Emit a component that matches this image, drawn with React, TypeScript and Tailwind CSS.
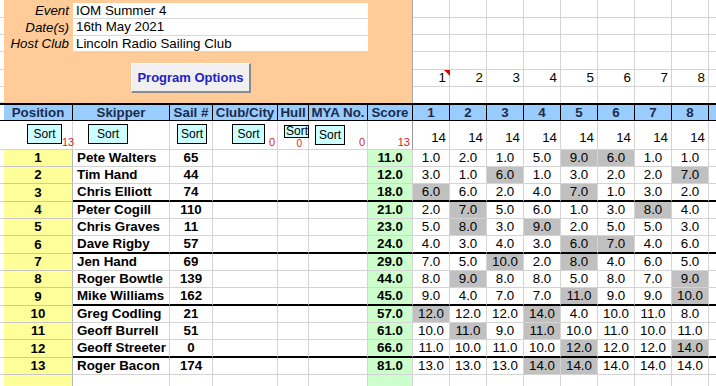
import React from "react";

type Row = { p: number; n: string; s: number; t: string; r: number[]; g: number[] };

const rows: Row[] = [
  { p: 1, n: "Pete Walters", s: 65, t: "11.0", r: [1, 2, 1, 5, 9, 6, 1, 1], g: [4, 5] },
  { p: 2, n: "Tim Hand", s: 44, t: "12.0", r: [3, 1, 6, 1, 3, 2, 2, 7], g: [2, 7] },
  { p: 3, n: "Chris Elliott", s: 74, t: "18.0", r: [6, 6, 2, 4, 7, 1, 3, 2], g: [0, 4] },
  { p: 4, n: "Peter Cogill", s: 110, t: "21.0", r: [2, 7, 5, 6, 1, 3, 8, 4], g: [1, 6] },
  { p: 5, n: "Chris Graves", s: 11, t: "23.0", r: [5, 8, 3, 9, 2, 5, 5, 3], g: [1, 3] },
  { p: 6, n: "Dave Rigby", s: 57, t: "24.0", r: [4, 3, 4, 3, 6, 7, 4, 6], g: [4, 5] },
  { p: 7, n: "Jen Hand", s: 69, t: "29.0", r: [7, 5, 10, 2, 8, 4, 6, 5], g: [2, 4] },
  { p: 8, n: "Roger Bowtle", s: 139, t: "44.0", r: [8, 9, 8, 8, 5, 8, 7, 9], g: [1, 7] },
  { p: 9, n: "Mike Williams", s: 162, t: "45.0", r: [9, 4, 7, 7, 11, 9, 9, 10], g: [4, 7] },
  { p: 10, n: "Greg Codling", s: 21, t: "57.0", r: [12, 12, 12, 14, 4, 10, 11, 8], g: [0, 3] },
  { p: 11, n: "Geoff Burrell", s: 51, t: "61.0", r: [10, 11, 9, 11, 10, 11, 10, 11], g: [1, 3] },
  { p: 12, n: "Geoff Streeter", s: 0, t: "66.0", r: [11, 10, 11, 10, 12, 12, 12, 14], g: [4, 7] },
  { p: 13, n: "Roger Bacon", s: 174, t: "81.0", r: [13, 13, 13, 14, 14, 14, 14, 14], g: [3, 4] },
];

const races = [1, 2, 3, 4, 5, 6, 7, 8];
const topRows = ["h-[18px]", "h-[17px]", "h-[17px]", "h-[18px]", "h-[17px]", "h-[16px]"];

function SortBtn({ className }: { className: string }) {
  return (
    <div className={`flex shrink-0 items-center justify-center overflow-hidden border border-black bg-[#ccffff] text-[12px] text-black ${className}`}>
      Sort
    </div>
  );
}

function Count({ v }: { v: number }) {
  return <span className="ml-auto self-end pr-[2px] pb-[1px] text-[11px] leading-none text-[#d02828]">{v}</span>;
}

function DataRow({ r, h, thick }: { r?: Row; h: string; thick: boolean }) {
  const line = thick ? "border-b-2 border-b-black" : "border-b border-b-[#d4d4d4]";
  const cell = `flex shrink-0 items-center border-r border-r-[#d4d4d4] ${line}`;
  return (
    <div className={`flex ${h}`}>
      <div className="w-[4px] shrink-0 border-b border-b-[#d4d4d4]" />
      <div className="flex w-[69px] shrink-0 items-center justify-center border-r border-b border-r-[#b8b8b8] border-b-[#c8c8c8] bg-[#ffff99] font-bold">
        {r?.p}
      </div>
      <div className={`${cell} w-[97px] pl-[4px] font-bold`}>{r?.n}</div>
      <div className={`${cell} w-[43px] justify-center font-bold`}>{r?.s}</div>
      <div className={`${cell} w-[65px]`} />
      <div className={`${cell} w-[31px]`} />
      <div className={`${cell} w-[59px]`} />
      <div className={`${cell} w-[45px] justify-center border-r-[#9a9a9a] bg-[#ccffcc] font-bold`}>{r?.t}</div>
      {races.map((k, i) => (
        <div key={k} className={`${cell} w-[37px] justify-center ${r && r.g.includes(i) ? "bg-[#c0c0c0]" : ""}`}>
          {r ? r.r[i].toFixed(1) : ""}
        </div>
      ))}
      <div className={`${cell} w-[7px] border-r-0`} />
    </div>
  );
}

export default function App() {
  return (
    <div className="h-[386px] w-[716px] overflow-hidden bg-white font-['Liberation_Sans',Arial,sans-serif] text-[13.33px] text-black">
      {/* top panel */}
      <div className="flex h-[103px]">
        <div className="flex w-[4px] shrink-0 flex-col">
          {topRows.map((h, i) => (
            <div key={i} className={`${h} border-b border-b-[#d4d4d4]`} />
          ))}
        </div>
        <div className="w-[409px] shrink-0 border-r border-r-[#a8a8a8] bg-[#ffcc99] pt-[3px]">
          {[
            ["Event", "IOM Summer 4", "h-[16px]"],
            ["Date(s)", "16th May 2021", "h-[17px]"],
            ["Host Club", "Lincoln Radio Sailing Club", "h-[16px]"],
          ].map(([label, value, h]) => (
            <div key={label} className={`flex ${h}`}>
              <div className="flex w-[69px] items-center justify-end pr-[4px] italic">{label}</div>
              <div className="flex w-[295px] items-center border-b border-b-[#d8d8d8] bg-white pl-[3px]">{value}</div>
            </div>
          ))}
          <div className="mt-[11px] ml-[127px] flex h-[30px] w-[120px] items-center justify-center border-t border-l border-r-2 border-b-2 border-t-white border-l-white border-r-[#8a8a8a] border-b-[#8a8a8a] bg-[#f0f0f0] text-[13px] font-bold text-[#1f1fc0]">
            Program Options
          </div>
        </div>
        <div className="flex flex-1 flex-col">
          {topRows.map((h, ri) => (
            <div key={ri} className={`flex ${h}`}>
              {races.map((k, i) => (
                <div
                  key={k}
                  className={`relative flex w-[37px] shrink-0 items-center justify-end border-r border-b border-r-[#d4d4d4] border-b-[#d4d4d4] pr-[3px] ${ri === 5 ? "border-b-0" : ""}`}
                >
                  {ri === 4 ? k : ""}
                  {ri === 4 && i === 0 && (
                    <span className="absolute top-0 right-[-1px] h-0 w-0 border-t-[6px] border-l-[6px] border-t-[#e00000] border-l-transparent" />
                  )}
                </div>
              ))}
              <div className={`w-[7px] border-b border-b-[#d4d4d4] ${ri === 5 ? "border-b-0" : ""}`} />
            </div>
          ))}
        </div>
      </div>

      {/* header row */}
      <div className="flex h-[18px] border-t-2 border-b border-t-black border-b-black font-bold text-[#1c2b4a]">
        <div className="w-[4px] shrink-0 bg-white" />
        {[
          ["Position", "w-[69px]"],
          ["Skipper", "w-[97px]"],
          ["Sail #", "w-[43px]"],
          ["Club/City", "w-[65px]"],
          ["Hull", "w-[31px]"],
          ["MYA No.", "w-[59px]"],
          ["Score", "w-[45px]"],
        ].map(([t, w]) => (
          <div key={t} className={`flex shrink-0 items-center justify-center overflow-hidden whitespace-nowrap border-r border-r-black bg-[#99ccff] ${w}`}>
            {t}
          </div>
        ))}
        {races.map((k) => (
          <div key={k} className="flex w-[37px] shrink-0 items-center justify-center border-r border-r-black bg-[#99ccff]">
            {k}
          </div>
        ))}
        <div className="w-[7px] shrink-0 bg-[#99ccff]" />
      </div>

      {/* sort row */}
      <div className="flex h-[29px]">
        <div className="w-[4px] shrink-0 border-b border-b-[#d4d4d4]" />
        <div className="flex w-[69px] shrink-0 border-r border-b border-r-[#d4d4d4] border-b-[#d4d4d4] pt-[3px]">
          <SortBtn className="ml-[23px] h-[20px] w-[35px]" />
          <Count v={13} />
        </div>
        <div className="flex w-[97px] shrink-0 border-r border-b border-r-[#d4d4d4] border-b-[#d4d4d4] pt-[3px]">
          <SortBtn className="ml-[15px] h-[20px] w-[40px]" />
        </div>
        <div className="flex w-[43px] shrink-0 border-r border-b border-r-[#d4d4d4] border-b-[#d4d4d4] pt-[3px]">
          <SortBtn className="ml-[7px] h-[20px] w-[30px]" />
        </div>
        <div className="flex w-[65px] shrink-0 border-r border-b border-r-[#d4d4d4] border-b-[#d4d4d4] pt-[3px]">
          <SortBtn className="ml-[19px] h-[20px] w-[33px]" />
          <Count v={0} />
        </div>
        <div className="relative flex w-[31px] shrink-0 border-r border-b border-r-[#d4d4d4] border-b-[#d4d4d4] pt-[4px]">
          <span className="absolute right-[6px] bottom-0 text-[10px] leading-none text-[#d02828]">0</span>
          <SortBtn className="relative ml-[6px] h-[13px] w-[25px] items-start justify-start pl-[1px] leading-[11px]" />
        </div>
        <div className="flex w-[59px] shrink-0 border-r border-b border-r-[#d4d4d4] border-b-[#d4d4d4] pt-[4px]">
          <SortBtn className="ml-[6px] h-[20px] w-[30px]" />
          <Count v={0} />
        </div>
        <div className="flex w-[45px] shrink-0 border-r border-b border-r-[#9a9a9a] border-b-[#d4d4d4]">
          <Count v={13} />
        </div>
        {races.map((k) => (
          <div key={k} className="flex w-[37px] shrink-0 items-end justify-end border-r border-b border-r-[#d4d4d4] border-b-[#d4d4d4] pr-[3px] pb-[1px]">
            14
          </div>
        ))}
        <div className="w-[7px] shrink-0 border-b border-b-[#d4d4d4]" />
      </div>

      {/* results */}
      {rows.map((r, i) => (
        <DataRow key={r.p} r={r} h={i % 3 === 2 && i < 12 ? "h-[18px]" : "h-[17px]"} thick={i % 3 === 2 && i < 12} />
      ))}
      <DataRow h="h-[14px]" thick={false} />
    </div>
  );
}
